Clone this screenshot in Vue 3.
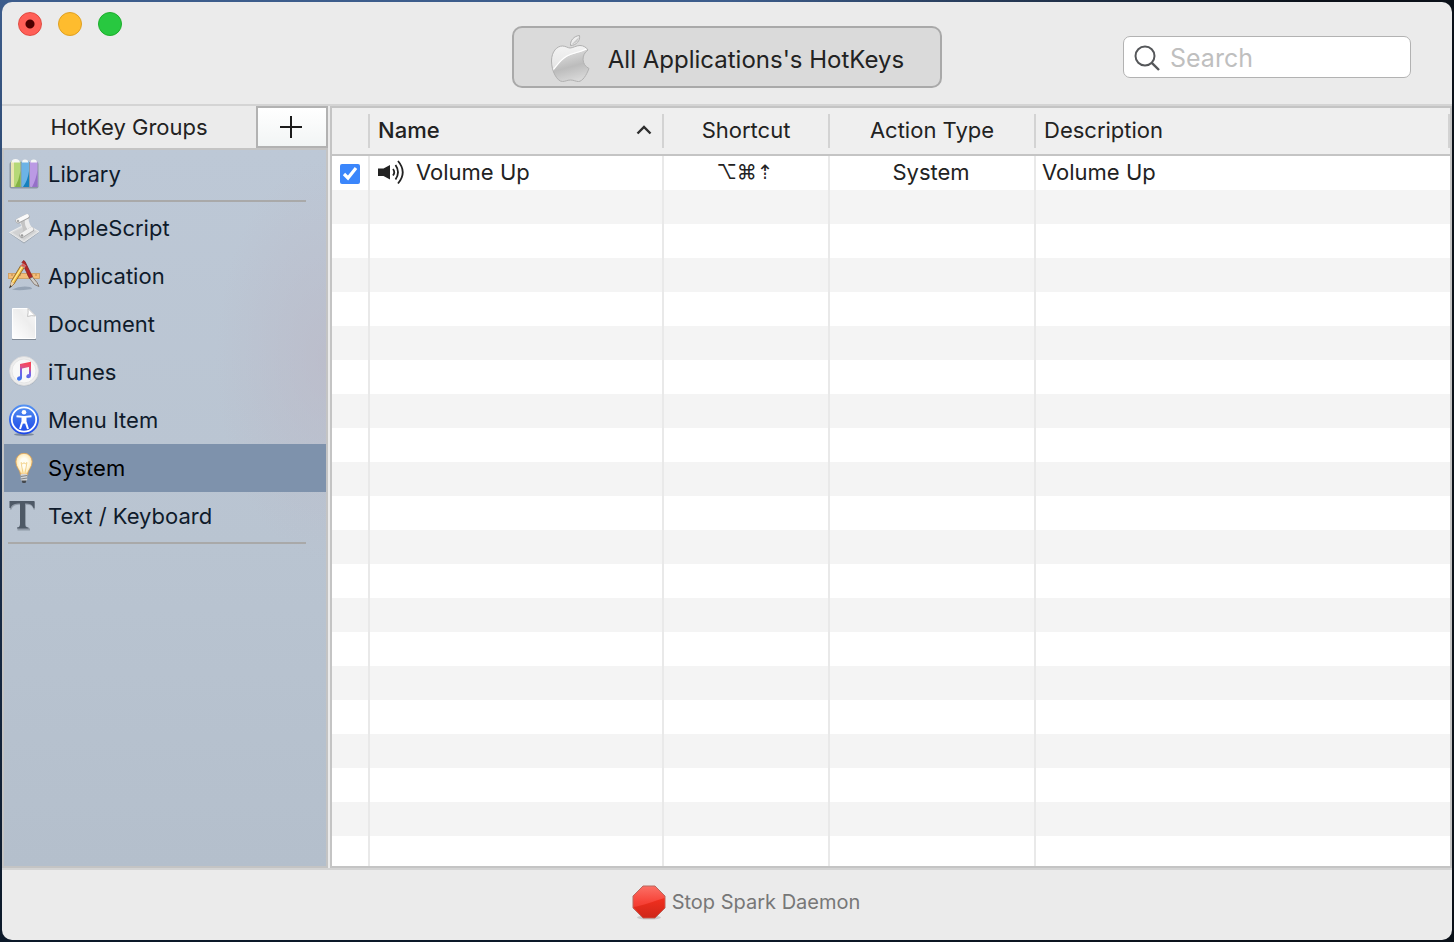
<script setup>
import { ref } from 'vue'

const query = ref('')
const selected = ref('System')
const groups = [
  [{ name: 'Library', icon: 'library' }],
  [
    { name: 'AppleScript', icon: 'script' },
    { name: 'Application', icon: 'application' },
    { name: 'Document', icon: 'document' },
    { name: 'iTunes', icon: 'itunes' },
    { name: 'Menu Item', icon: 'menu' },
    { name: 'System', icon: 'system' },
    { name: 'Text / Keyboard', icon: 'text' }
  ]
]
const hotkeys = ref([
  { name: 'Volume Up', shortcut: '⌥⌘⇡', type: 'System', description: 'Volume Up', enabled: true }
])
const fillerRows = 40
</script>

<template>
  <main class="window">
    <header class="toolbar">
      <div class="lights">
        <button class="light close" aria-label="Close"></button>
        <button class="light minimise" aria-label="Minimise"></button>
        <button class="light zoom" aria-label="Zoom"></button>
      </div>
      <button class="target">
        <svg class="apple" viewBox="0 0 40 50" width="40" height="50" aria-hidden="true">
          <defs>
            <linearGradient id="silver" x1="0" y1="0" x2="0" y2="1">
              <stop offset="0" stop-color="#fafafa" />
              <stop offset="1" stop-color="#dcdcdc" />
            </linearGradient>
            <linearGradient id="sheen" x1="0.300" y1="0" x2="0.600" y2="1">
              <stop offset="0" stop-color="#e6e6e6" />
              <stop offset=".55" stop-color="#bcbcbc" />
              <stop offset="1" stop-color="#dedede" />
            </linearGradient>
            <clipPath id="appleBody">
              <path d="M20 14C23 14 26 11.500 30 11.500C33.500 11.500 36.500 13.500 38 16C31 20.500 31.500 31 39 34.500C36.500 41 32.500 47.500 28.500 47.500C25.500 47.500 24 46 20.500 46C17 46 15.500 47.500 12.500 47.500C7 47.500 1.500 37 1.500 27C1.500 17.500 7 12 12.500 12C15.500 12 18 14 20 14Z" />
            </clipPath>
          </defs>
          <g clip-path="url(#appleBody)">
            <rect width="40" height="50" fill="url(#silver)" />
            <path d="M0 40C6 34 9 27 17 22.500C24 18.500 33 19 40 13V50H0Z" fill="url(#sheen)" />
            <path d="M0 39.500C6 33.500 9 26.500 17 22C24 18 33 18.500 40 12.500" fill="none" stroke="#fff" stroke-width="1.200" />
          </g>
          <path d="M20 14C23 14 26 11.500 30 11.500C33.500 11.500 36.500 13.500 38 16C31 20.500 31.500 31 39 34.500C36.500 41 32.500 47.500 28.500 47.500C25.500 47.500 24 46 20.500 46C17 46 15.500 47.500 12.500 47.500C7 47.500 1.500 37 1.500 27C1.500 17.500 7 12 12.500 12C15.500 12 18 14 20 14Z" fill="none" stroke="#b0b0b0" stroke-width="1" />
          <path d="M20.500 11.500C20 6.500 24 2 29.500 1.500C30.500 6 26.500 11.500 20.500 11.500Z" fill="#ededed" stroke="#aeaeae" stroke-width="1" />
          <path d="M21.500 10.500C25.500 10 28.500 6.500 29 3Z" fill="#c6c6c6" />
        </svg>
        <span>All Applications's HotKeys</span>
      </button>
      <label class="search">
        <svg viewBox="0 0 26 26" width="26" height="26" aria-hidden="true">
          <circle cx="11" cy="11" r="9.500" fill="none" stroke="#55575a" stroke-width="2" />
          <path d="M17.800 17.800L25 25" stroke="#55575a" stroke-width="2.400" />
        </svg>
        <input v-model="query" type="text" placeholder="Search" aria-label="Search" />
      </label>
    </header>

    <div class="content">
      <aside class="sidebar">
        <div class="side-head">
          <h2>HotKey Groups</h2>
          <button class="add" aria-label="Add group">
            <svg viewBox="0 0 22 22" width="22" height="22" aria-hidden="true"><path d="M11 0V22M0 11H22" stroke="#1b1b1b" stroke-width="2" /></svg>
          </button>
        </div>
        <nav class="groups">
          <ul v-for="(group, g) in groups" :key="g">
            <li v-for="item in group" :key="item.name">
              <button class="item" :class="{ active: selected === item.name }" @click="selected = item.name">
                <svg class="icon" viewBox="0 0 32 32" width="32" height="32" aria-hidden="true">
                  <g v-if="item.icon === 'library'">
                    <rect x="1.500" y="4" width="29" height="26.500" rx="2" fill="#7b8794" opacity=".75" />
                    <rect x="3" y="3" width="9.500" height="26" rx="1" fill="#b5d877" />
                    <rect x="3" y="4" width="3" height="25" fill="#e9e6b0" />
                    <path d="M12.500 13Q11 22 7 29H12.500Z" fill="#83b344" />
                    <rect x="13.500" y="3" width="7.500" height="26" rx="1" fill="#6cb3e6" />
                    <path d="M21 13Q20 22 15 29H21Z" fill="#1580bd" />
                    <rect x="22" y="3" width="7.500" height="26" rx="1" fill="#bb9ae4" />
                    <path d="M29.500 12Q28 22 24 29H29.500Z" fill="#9570c8" />
                    <path d="M3.500 4.500Q3.500 1 7.500 1T12 4.500ZM14 4.500Q14 1.500 17 1.500T20.500 4.500ZM22.500 4.500Q22.500 1.500 25.700 1.500T29 4.500Z" fill="#f5f6f5" />
                  </g>
                  <g v-else-if="item.icon === 'script'">
                    <path d="M1.500 21.500L16 31.500L31 20.500L18 13Z" fill="#8f979e" opacity=".7" />
                    <path d="M1.500 20.500L16 30L31 19.500L18 12Z" fill="#dcddde" stroke="#f3f3f3" stroke-width=".800" />
                    <path d="M4.500 20.500L16 28L28 19.500L18 14Z" fill="#d0d1d2" />
                    <path d="M15 7L21 4.500Q19.500 9 23.500 15L14 21Q15.500 15 11 10Z" fill="#ececec" />
                    <path d="M12 10L17 7Q16 13 19.500 17.500L14 21Q15.500 15 12 10Z" fill="#c4c4c4" />
                    <path d="M14 23.500L23.500 17.500" stroke="#a6a6a6" stroke-width="5" stroke-linecap="round" />
                    <path d="M14 23L23.500 17" stroke="#f1f1f1" stroke-width="4" stroke-linecap="round" />
                    <path d="M10 9L19 4.500" stroke="#a6a6a6" stroke-width="5" stroke-linecap="round" />
                    <path d="M10 8.500L19 4" stroke="#fafafa" stroke-width="4" stroke-linecap="round" />
                    <circle cx="10" cy="9" r="1.300" fill="#aaa" />
                    <circle cx="14" cy="23.500" r="1.300" fill="#999" />
                  </g>
                  <g v-else-if="item.icon === 'application'">
                    <path d="M4 29.500Q12 25.500 22 27Q27 29 20 29.500Q11 31 4 29.500Z" fill="#77879b" opacity=".55" />
                    <rect x=".500" y="13.500" width="31" height="5" fill="#f3bd77" stroke="#cf9a58" stroke-width=".800" />
                    <path d="M4 14V16M8 14V16M12 14V16M20 14V16M24 14V16M28 14V16" stroke="#a87840" stroke-width=".800" />
                    <path d="M14 2.500L15.500 .500L17 1.500L24.500 17L21.500 18.500Z" fill="#b62625" stroke="#7b1c1d" stroke-width=".700" />
                    <path d="M21.800 18.500L24.500 17L29 22.500L31 26.500L26.500 24.500Z" fill="#cfcdc9" stroke="#77675a" stroke-width=".800" />
                    <path d="M13 5L16.500 7L6 24L2.500 27L3.500 21Z" fill="#f5bd40" stroke="#8a642e" stroke-width=".900" />
                    <path d="M14 7L4.500 22" stroke="#fff1a0" stroke-width="1.200" />
                    <path d="M12.500 6L14.500 3.500L17.500 5.500L16.500 7.500Z" fill="#e0584e" stroke="#b9b9b9" stroke-width=".600" />
                    <path d="M3.500 21.500L6 23.500L1.500 28Z" fill="#e9cfae" />
                    <path d="M2.200 25L1 28.500L3.800 26.500Z" fill="#333" />
                  </g>
                  <g v-else-if="item.icon === 'document'">
                    <defs>
                      <linearGradient id="paper" x1="0" y1="1" x2="1" y2="0">
                        <stop offset="0" stop-color="#fff" />
                        <stop offset=".6" stop-color="#ededed" />
                        <stop offset="1" stop-color="#fafafa" />
                      </linearGradient>
                    </defs>
                    <path d="M4 1.500H20.500L28 9V32H4Z" fill="#66717c" opacity=".7" />
                    <path d="M4.500 .500H20L27.500 8V30.500H4.500Z" fill="url(#paper)" stroke="#fff" />
                    <path d="M20 .500Q20.500 5 19.500 8.500Q23.500 7 27.500 8Z" fill="#fff" stroke="#b8b8b8" stroke-width=".800" />
                  </g>
                  <g v-else-if="item.icon === 'itunes'">
                    <defs>
                      <linearGradient id="note" x1="0.600" y1="0" x2="0.400" y2="1">
                        <stop offset="0" stop-color="#fa4452" />
                        <stop offset=".28" stop-color="#e4507c" />
                        <stop offset=".5" stop-color="#7d5fe4" />
                        <stop offset="1" stop-color="#3d78ee" />
                      </linearGradient>
                    </defs>
                    <circle cx="16" cy="15.500" r="14.700" fill="#98a2ae" opacity=".6" />
                    <circle cx="16" cy="15" r="14.500" fill="#ededed" stroke="#d9d9db" stroke-width=".800" />
                    <circle cx="16" cy="15" r="12" fill="#f8f8f8" stroke="#e6e6e6" />
                    <path d="M12 8L23 5.800V19.500Q23 22 20.500 22.300Q18 22.200 18.300 20Q18.800 18 21 18V11L14 12.400V22Q13.500 24.700 10.800 24.700Q8.500 24.300 9 22Q9.800 20.200 12 20.300Z" fill="url(#note)" />
                  </g>
                  <g v-else-if="item.icon === 'menu'">
                    <defs>
                      <linearGradient id="blue" x1="0" y1="0" x2="0" y2="1">
                        <stop offset="0" stop-color="#5593f2" />
                        <stop offset="1" stop-color="#1c46e8" />
                      </linearGradient>
                    </defs>
                    <ellipse cx="16" cy="30.500" rx="10" ry="1.500" fill="#53627a" opacity=".6" />
                    <circle cx="16" cy="15.500" r="15" fill="url(#blue)" />
                    <circle cx="16" cy="15.500" r="12.200" fill="none" stroke="#fff" stroke-width="1.800" />
                    <circle cx="16" cy="8.200" r="2.300" fill="#fff" />
                    <path d="M8.500 12.200L14.500 12.800V17.500L12 25M23.500 12.200L17.500 12.800V17.500L20 25" stroke="#fff" stroke-width="2" fill="none" />
                    <path d="M14 12H18V18.500L16 20L14 18.500Z" fill="#fff" />
                  </g>
                  <g v-else-if="item.icon === 'system'">
                    <defs>
                      <radialGradient id="glow" cx=".5" cy=".45" r=".55">
                        <stop offset=".4" stop-color="#fffdf2" />
                        <stop offset=".8" stop-color="#ffecbc" />
                        <stop offset="1" stop-color="#f0b35c" />
                      </radialGradient>
                    </defs>
                    <path d="M12.500 23C12.500 18 7.800 15.500 7.800 9.500A8.200 8.200 0 0 1 24.200 9.500C24.200 15.500 19.500 18 19.500 23Z" fill="url(#glow)" stroke="#dfa352" stroke-width=".800" />
                    <path d="M15 21L13 10.500L14.800 12L16 10.500L17.200 12L19 10.500L17 21" fill="none" stroke="#f0cd80" stroke-width=".900" />
                    <path d="M12.800 22H19.200V27.500L18 29.500H14L12.800 27.500Z" fill="#d3d5d7" />
                    <path d="M12.800 24.500L19.200 23.500M12.800 27L19.200 26" stroke="#77797b" stroke-width=".900" />
                    <path d="M13.500 28.500H18.500L17.500 31H14.500Z" fill="#44484d" />
                  </g>
                  <g v-else>
                    <path d="M2 2H27V9.500H25.500C24.500 6 23 4.800 18 4.800V25Q18 28 22 28.500V30.500H9.500V28.500Q12 28 12 25V4.800C7 4.800 4.500 6 3.500 9.500H2Z" fill="#7f8996" opacity=".7" />
                    <path d="M1.500 1H26.500V8H25.500C24 4.500 22.500 3.500 17 3.500V24Q17 27.500 20.500 27.500V28.500H9V27.500Q12 27.500 12 24V3.500C6.500 3.500 4 4.500 2.500 8H1.500Z" fill="#4e5966" />
                  </g>
                </svg>
                <span>{{ item.name }}</span>
              </button>
            </li>
          </ul>
        </nav>
      </aside>

      <section class="list">
        <table>
          <colgroup>
            <col class="c-check" /><col class="c-name" /><col class="c-short" /><col class="c-type" /><col />
          </colgroup>
          <thead>
            <tr>
              <th aria-label="Enabled"></th>
              <th class="sorted" aria-sort="ascending">
                <div class="sort">
                  <span>Name</span>
                  <svg viewBox="0 0 16 10" width="16" height="10" aria-hidden="true"><path d="M1.500 8.500L8 2L14.500 8.500" fill="none" stroke="#2e2e2e" stroke-width="2.400" /></svg>
                </div>
              </th>
              <th class="mid">Shortcut</th>
              <th class="mid">Action Type</th>
              <th>Description</th>
            </tr>
          </thead>
          <tbody>
            <tr v-for="key in hotkeys" :key="key.name">
              <td class="check"><input v-model="key.enabled" type="checkbox" :aria-label="key.name" /></td>
              <td>
                <div class="name">
                  <svg viewBox="0 0 28 26" width="28" height="26" aria-hidden="true">
                    <path d="M0 9.500H5.500L12 6V20.500L5.500 17H0Z" fill="#222" />
                    <path d="M15 10Q17.500 13.200 15 16.500M17.500 6Q22.500 13.200 17.500 20.500M20 2Q29.500 13.200 20 24.500" fill="none" stroke="#222" stroke-width="1.800" />
                  </svg>
                  <span>{{ key.name }}</span>
                </div>
              </td>
              <td class="mid keys">{{ key.shortcut }}</td>
              <td class="mid">{{ key.type }}</td>
              <td>{{ key.description }}</td>
            </tr>
            <tr v-for="n in fillerRows" :key="n" aria-hidden="true">
              <td></td><td></td><td></td><td></td><td></td>
            </tr>
          </tbody>
        </table>
      </section>
    </div>

    <footer class="footer">
      <button class="stop">
        <svg viewBox="0 0 34 36" width="34" height="36" aria-hidden="true">
          <defs>
            <linearGradient id="red" x1="0" y1="0" x2="0" y2="1">
              <stop offset="0" stop-color="#fb7066" />
              <stop offset=".5" stop-color="#f74338" />
              <stop offset="1" stop-color="#e5301f" />
            </linearGradient>
            <linearGradient id="deep" x1="0" y1="0" x2="0" y2="1">
              <stop offset="0" stop-color="#f2301f" />
              <stop offset="1" stop-color="#cf2618" />
            </linearGradient>
          </defs>
          <ellipse cx="17" cy="33.500" rx="12" ry="2" fill="#aaa" opacity=".5" />
          <path d="M11 2H23L33 12V24L23 34H11L1 24V12Z" fill="url(#red)" stroke="#b9685f" stroke-width="1" />
          <path d="M1.500 23C10 22 22 17 32.500 14V24L23 33.500H11Z" fill="url(#deep)" />
        </svg>
        <span>Stop Spark Daemon</span>
      </button>
    </footer>
  </main>
</template>

<style>
body {
  background: linear-gradient(90deg, transparent 50%, #0b1119 90%), linear-gradient(#3d5d8c, #1e3557 40%, #0c1929);
}
</style>

<style scoped>
* { box-sizing: border-box; }
button {
  margin: 0;
  padding: 0;
  border: 0;
  background: none;
  color: inherit;
  font: inherit;
}
.window {
  display: flex;
  flex-direction: column;
  height: calc(100vh - 4px);
  margin: 2px;
  overflow: hidden;
  border-radius: 10px;
  background: #ebebeb;
  color: #222;
  font: 22px/28px Inter, "Liberation Sans", "DejaVu Sans", sans-serif;
}
.toolbar {
  display: grid;
  grid-template-columns: 1fr auto 1fr;
  align-items: center;
  flex: none;
  height: 104px;
  padding: 8px 41px 0;
  border-bottom: 2px solid #d4d4d4;
}
.lights {
  display: flex;
  gap: 16px;
  align-self: start;
  margin: 2px 0 0 -25px;
}
.light {
  width: 24px;
  height: 24px;
  border: 1px solid #e1493f;
  border-radius: 50%;
  background: #ff5f57;
}
.close { background: radial-gradient(circle, #4d0000 4px, #ff5f57 5px); }
.minimise { border-color: #dfa023; background: #febc2e; }
.zoom { border-color: #1dad2b; background: #28c840; }
.target {
  display: flex;
  align-items: center;
  gap: 18px;
  height: 62px;
  padding: 4px 36px 0;
  border: 2px solid #a9a9a9;
  border-radius: 10px;
  background: #dadada;
  font-size: 24px;
}
.target span { padding-top: 2px; }
.search {
  display: flex;
  align-items: center;
  gap: 10px;
  justify-self: end;
  width: 288px;
  height: 42px;
  padding: 2px 10px 0;
  border: 1px solid #b2b2b2;
  border-radius: 7px;
  background: #fff;
}
.search svg { flex: none; }
.search input {
  flex: 1;
  min-width: 0;
  padding: 0;
  border: 0;
  outline: 0;
  background: none;
  color: #222;
  font: inherit;
  font-size: 25px;
}
.search input::placeholder { color: #bfbfbf; opacity: 1; }
.content {
  display: flex;
  flex: 1;
  min-height: 0;
  border-bottom: 2px solid #d4d4d4;
}
.sidebar {
  display: flex;
  flex-direction: column;
  flex: none;
  width: 326px;
}
.side-head { display: flex; height: 42px; }
h2 {
  flex: 1;
  margin: 0;
  font: inherit;
  line-height: 42px;
  text-align: center;
}
.add {
  display: flex;
  align-items: center;
  justify-content: center;
  width: 72px;
  padding-right: 2px;
  border: 2px solid #b2b2b2;
  background: linear-gradient(#fff, #f2f5f5);
}
.groups {
  flex: 1;
  border: 2px solid #c4c4c4;
  background:
    radial-gradient(ellipse 110px 200px at 100% 210px, rgba(188, 184, 198, .6), transparent),
    linear-gradient(#bdc8d6, #b9c4d1 55%, #b4bfcc);
}
ul {
  margin: 0;
  padding: 0 0 6px;
  list-style: none;
  background: linear-gradient(#a9a9a9, #a9a9a9) 4px calc(100% - 2px) / calc(100% - 24px) 2px no-repeat;
}
.item {
  display: flex;
  align-items: center;
  gap: 8px;
  width: 100%;
  height: 48px;
  padding-left: 4px;
  color: #0f1b2b;
  text-align: left;
}
.item.active { background: #7e92ac; color: #000; }
.list {
  flex: 1;
  min-width: 0;
  margin-left: 2px;
  overflow: hidden;
  border: 2px solid #c4c4c4;
  background: #fff;
}
table {
  width: 100%;
  table-layout: fixed;
  border-collapse: separate;
  border-spacing: 0;
}
.c-check { width: 38px; }
.c-name { width: 294px; }
.c-short { width: 166px; }
.c-type { width: 206px; }
th {
  height: 48px;
  padding: 0 12px 2px 8px;
  border-bottom: 2px solid #c4c4c4;
  background: linear-gradient(#d3d3d3, #d3d3d3) right center / 2px 34px no-repeat #efefef;
  font-weight: 400;
  text-align: left;
}
th.sorted { font-weight: 500; }
.sort { display: flex; align-items: center; justify-content: space-between; }
td {
  height: 34px;
  padding: 0 8px 2px;
  border-right: 2px solid #e9e9e9;
}
td:last-child { padding-left: 6px; border-right: 0; }
tr:nth-child(even) td { background: #f4f4f4; }
th.mid, td.mid { padding: 0 2px 2px 0; text-align: center; }
td.check { padding: 2px 0 0 8px; }
.check input {
  display: block;
  width: 20px;
  height: 20px;
  margin: 0;
  accent-color: #3b86fb;
}
.name { display: flex; align-items: center; gap: 10px; }
td.keys { font-size: 20px; }
.footer {
  display: flex;
  align-items: center;
  justify-content: center;
  flex: none;
  height: 70px;
  padding: 0 0 6px 38px;
}
.stop {
  display: flex;
  align-items: center;
  gap: 6px;
  color: #777;
  font-size: 20px;
}
</style>
